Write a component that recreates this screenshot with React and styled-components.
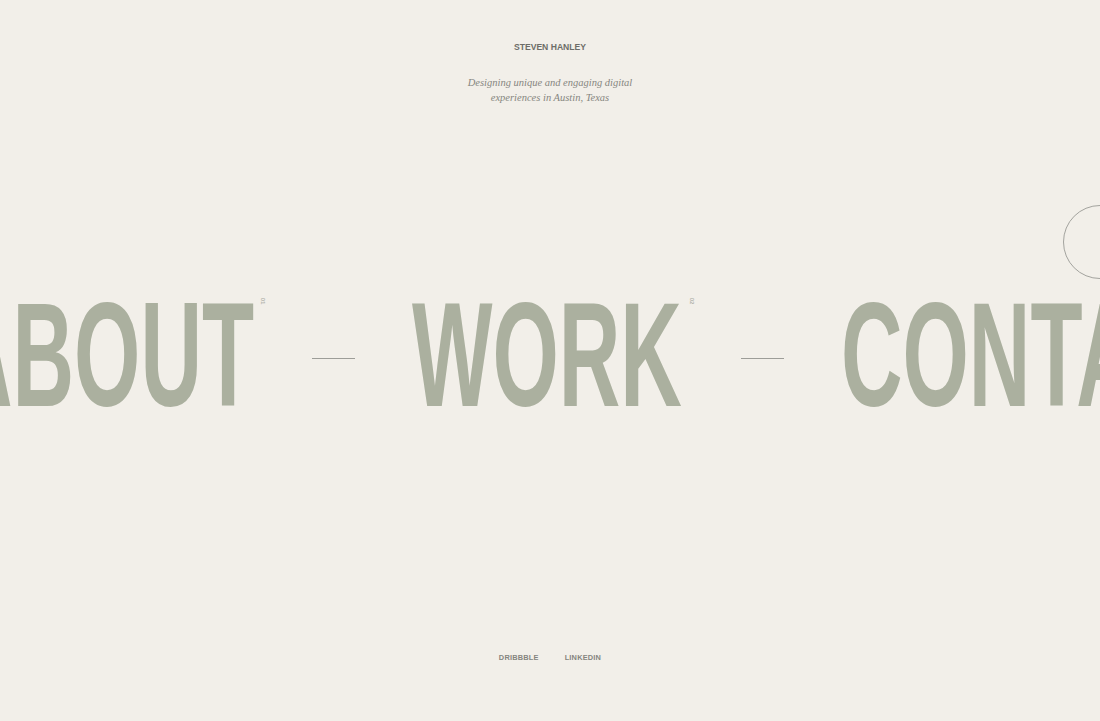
import React from "react";
import styled, { createGlobalStyle } from "styled-components";

const GlobalStyle = createGlobalStyle`
  html, body {
    margin: 0;
    padding: 0;
    background: #f2efe9;
  }
  body {
    font-family: "Liberation Sans", Arial, sans-serif;
  }
`;

const words = [
  { label: "ABOUT", index: "01", width: 302 },
  { label: "WORK", index: "02", width: 270 },
  { label: "CONTACT", index: "03", width: 470 },
];

const App = () => {
  return (
    <>
      <GlobalStyle />
      <Page>
        <Header>
          <Name>Steven Hanley</Name>
          <Tagline>
            Designing unique and engaging digital
            <br />
            experiences in Austin, Texas
          </Tagline>
        </Header>

        <Stage>
          <Track>
            {words.map((w, i) => (
              <React.Fragment key={w.label}>
                {i > 0 && <Dash />}
                <WordBox width={w.width}>
                  <Word>{w.label}</Word>
                  <Index>{w.index}</Index>
                </WordBox>
              </React.Fragment>
            ))}
          </Track>
        </Stage>

        <Footer>
          <FooterLink href="#">Dribbble</FooterLink>
          <FooterLink href="#">LinkedIn</FooterLink>
        </Footer>

        <Cursor />
      </Page>
    </>
  );
};

export default App;

const Page = styled.div`
  position: relative;
  height: 721px;
  overflow: hidden;
  display: flex;
  flex-direction: column;
  align-items: center;
`;

const Header = styled.header`
  display: flex;
  flex-direction: column;
  align-items: center;
  padding-top: 41px;
`;

const Name = styled.h1`
  margin: 0;
  font-family: "Liberation Sans", Arial, sans-serif;
  font-size: 8.6px;
  line-height: 12px;
  font-weight: 700;
  text-transform: uppercase;
  letter-spacing: 0;
  color: #6d6d68;
`;

const Tagline = styled.p`
  margin: 22px 0 0;
  font-family: "Liberation Serif", "Times New Roman", serif;
  font-style: italic;
  font-size: 10.5px;
  line-height: 15px;
  text-align: center;
  color: #86867f;
`;

const Stage = styled.main`
  flex: 1;
  width: 100%;
`;

const Track = styled.div`
  display: flex;
  align-items: flex-start;
  white-space: nowrap;
  margin-top: 175px;
  margin-left: -49px;
`;

const WordBox = styled.div`
  position: relative;
  flex: none;
  width: ${({ width }) => width}px;
  height: 149px;
`;

const Word = styled.span`
  display: inline-block;
  font-family: "Liberation Sans", Arial, sans-serif;
  font-weight: 700;
  font-size: 149px;
  line-height: 1;
  color: #abb09f;
  transform: scaleX(0.572);
  transform-origin: left top;
`;

const Index = styled.span`
  position: absolute;
  top: 18px;
  right: -14px;
  font-size: 6px;
  line-height: 6px;
  font-weight: 700;
  color: #b5b5ae;
  transform: rotate(90deg);
`;

const Dash = styled.span`
  flex: none;
  width: 43px;
  height: 1px;
  margin: 78px 57px 0 59px;
  background: #9d9d98;
`;

const Cursor = styled.div`
  position: absolute;
  top: 205px;
  left: 1063px;
  width: 74px;
  height: 74px;
  border: 1px solid #a3a39e;
  border-radius: 50%;
  box-sizing: border-box;
`;

const Footer = styled.footer`
  display: flex;
  gap: 26px;
  padding-bottom: 58px;
`;

const FooterLink = styled.a`
  font-family: "Liberation Sans", Arial, sans-serif;
  font-size: 7.4px;
  line-height: 10px;
  font-weight: 700;
  text-transform: uppercase;
  letter-spacing: 0.2px;
  text-decoration: none;
  color: #85857f;
`;
